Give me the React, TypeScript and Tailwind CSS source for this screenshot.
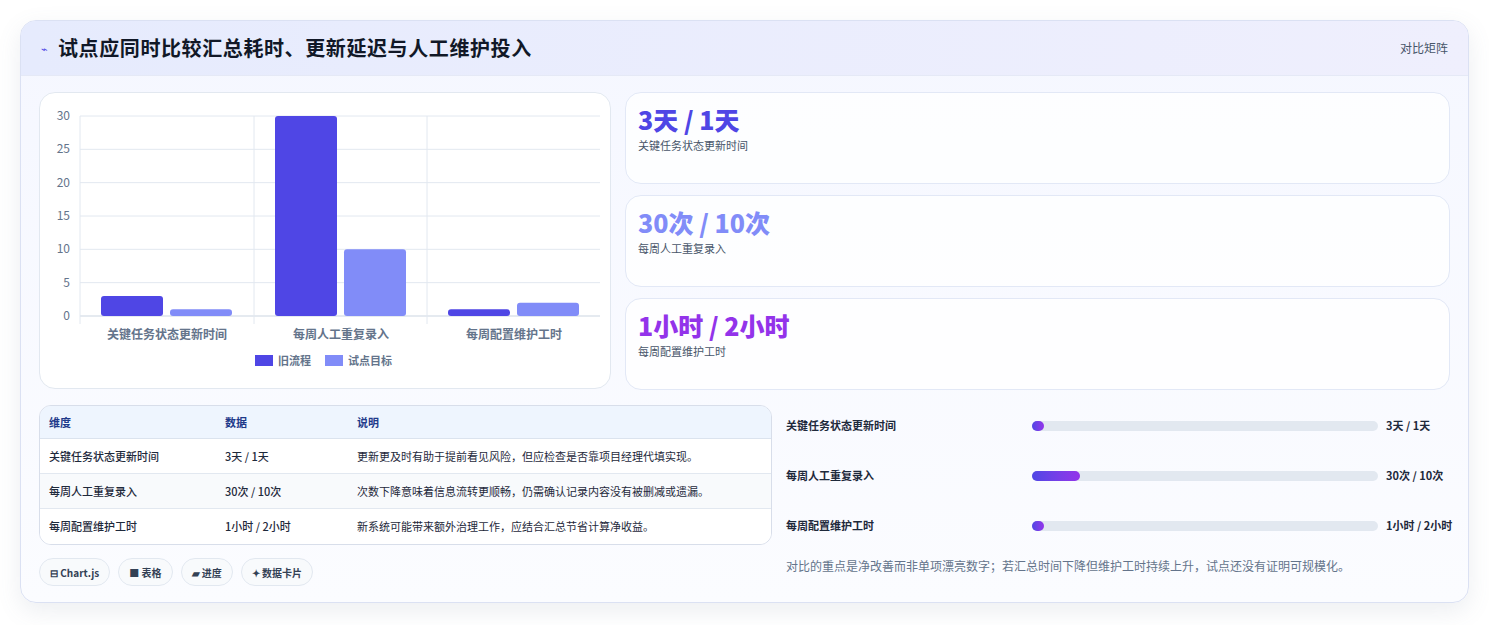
import React from 'react';

const font = '"Noto Sans CJK SC", "Noto Sans", sans-serif';

const kpis = [
  { v: '3天 / 1天', l: '关键任务状态更新时间', c: 'text-[#4f46e5]' },
  { v: '30次 / 10次', l: '每周人工重复录入', c: 'text-[#818cf8]' },
  { v: '1小时 / 2小时', l: '每周配置维护工时', c: 'text-[#9333ea]' },
];

const rows = [
  ['关键任务状态更新时间', '3天 / 1天', '更新更及时有助于提前看见风险，但应检查是否靠项目经理代填实现。'],
  ['每周人工重复录入', '30次 / 10次', '次数下降意味着信息流转更顺畅，仍需确认记录内容没有被删减或遗漏。'],
  ['每周配置维护工时', '1小时 / 2小时', '新系统可能带来额外治理工作，应结合汇总节省计算净收益。'],
];

const progress = [
  { l: '关键任务状态更新时间', v: '3天 / 1天', w: 12 },
  { l: '每周人工重复录入', v: '30次 / 10次', w: 48 },
  { l: '每周配置维护工时', v: '1小时 / 2小时', w: 12 },
];

function Chart() {
  const y0 = 223;
  const unit = 200 / 30;
  const groups = [
    { label: '关键任务状态更新时间', a: 3, b: 1, x: 61 },
    { label: '每周人工重复录入', a: 30, b: 10, x: 235 },
    { label: '每周配置维护工时', a: 1, b: 2, x: 408 },
  ];
  return (
    <svg width="572" height="297" className="block">
      {[0, 5, 10, 15, 20, 25, 30].map((t) => {
        const y = y0 - t * unit;
        return (
          <g key={t}>
            <line x1="40" x2="560" y1={y} y2={y} stroke={t === 0 ? '#cbd5e1' : '#e2e8f0'} />
            <text x="30" y={y + 4} textAnchor="end" fontSize="12" fill="#64748b" fontFamily={font}>{t}</text>
          </g>
        );
      })}
      {[40, 214, 387].map((x) => (
        <line key={x} x1={x} x2={x} y1={y0 - 200} y2={y0 + 8} stroke="#e2e8f0" />
      ))}
      {groups.map((g) => (
        <g key={g.label}>
          <rect x={g.x} y={y0 - g.a * unit} width="62" height={g.a * unit} rx="3" fill="#4f46e5" />
          <rect x={g.x + 69} y={y0 - g.b * unit} width="62" height={g.b * unit} rx="3" fill="#818cf8" />
          <text x={g.x + 66} y="246" textAnchor="middle" fontSize="12" fontWeight="600" fill="#64748b" fontFamily={font}>{g.label}</text>
        </g>
      ))}
      <rect x="215" y="262" width="18" height="11" fill="#4f46e5" />
      <text x="238" y="272" fontSize="11" fontWeight="600" fill="#64748b" fontFamily={font}>旧流程</text>
      <rect x="285" y="262" width="18" height="11" fill="#818cf8" />
      <text x="308" y="272" fontSize="11" fontWeight="600" fill="#64748b" fontFamily={font}>试点目标</text>
    </svg>
  );
}

export default function App() {
  return (
    <div className="min-h-[625px] bg-white p-5" style={{ fontFamily: font }}>
      <div className="rounded-2xl border border-[#dbe1f3] bg-gradient-to-b from-[#f5f7ff] to-[#fbfcff] shadow-[0_8px_24px_rgba(100,116,139,0.12)] overflow-hidden">
        <div className="flex h-[55px] items-center justify-between bg-gradient-to-r from-[#e6ebfd] to-[#efeffd] px-5 border-b border-[#e5e9f6]">
          <div className="flex items-center gap-[10px]">
            <span className="text-[11px] text-[#4f46e5]">⌁</span>
            <h1 className="text-[20px] font-bold tracking-[0.6px] text-[#111827]">试点应同时比较汇总耗时、更新延迟与人工维护投入</h1>
          </div>
          <span className="text-[12px] text-[#475569]">对比矩阵</span>
        </div>
        <div className="px-[18px] pt-[16px] pb-4">
          <div className="flex gap-[14px]">
            <div className="w-[572px] h-[297px] rounded-2xl border border-[#e2e8f0] bg-white shrink-0">
              <Chart />
            </div>
            <div className="flex flex-1 flex-col gap-[11px]">
              {kpis.map((k) => (
                <div key={k.l} className="h-[92px] rounded-2xl border border-[#e2e8f6] bg-white/80 px-[12px] pt-[8px]">
                  <div className={`text-[25px] font-extrabold leading-[36px] ${k.c}`}>{k.v}</div>
                  <div className="text-[11px] text-[#475569]">{k.l}</div>
                </div>
              ))}
            </div>
          </div>
          <div className="mt-[15px] flex gap-[14px]">
            <div className="w-[733px] shrink-0">
              <table className="w-full border-separate border-spacing-0 overflow-hidden rounded-xl border border-[#d8deea] text-[11px] text-[#1e293b]">
                <thead>
                  <tr className="bg-[#eef5fe] text-[#1e3a8a] font-semibold">
                    <td className="h-[33px] pl-[9px] w-[185px] border-b border-[#dbe3ee]">维度</td>
                    <td className="w-[132px] border-b border-[#dbe3ee]">数据</td>
                    <td className="border-b border-[#dbe3ee]">说明</td>
                  </tr>
                </thead>
                <tbody>
                  {rows.map((r, i) => (
                    <tr key={i} className={i === 1 ? 'bg-[#f8fafc]' : 'bg-white'}>
                      <td className={`h-[35px] pl-[9px] font-medium ${i < 2 ? 'border-b border-[#e2e8f0]' : ''}`}>{r[0]}</td>
                      <td className={`font-medium ${i < 2 ? 'border-b border-[#e2e8f0]' : ''}`}>{r[1]}</td>
                      <td className={i < 2 ? 'border-b border-[#e2e8f0]' : ''}>{r[2]}</td>
                    </tr>
                  ))}
                </tbody>
              </table>
              <div className="mt-[13px] flex gap-2 text-[10px] font-semibold text-[#334155]">
                {['⊟ Chart.js', '■ 表格', '▰ 进度', '✦ 数据卡片'].map((c) => (
                  <span key={c} className="h-[28px] flex items-center rounded-full border border-[#e2e8f0] bg-[#f8fafc] px-[10px]">{c}</span>
                ))}
              </div>
            </div>
            <div className="flex-1 pt-[11px]">
              {progress.map((p) => (
                <div key={p.l} className="flex h-[50px] items-start pt-[1px] text-[11px] font-semibold text-[#1e293b]">
                  <div className="w-[246px] shrink-0">{p.l}</div>
                  <div className="mt-[4px] h-[10px] flex-1 rounded-full bg-[#e2e8f0]">
                    <div className="h-full rounded-full bg-gradient-to-r from-[#4f46e5] to-[#9333ea]" style={{ width: p.w }} />
                  </div>
                  <div className="w-[72px] shrink-0 pl-2 whitespace-nowrap">{p.v}</div>
                </div>
              ))}
              <p className="mt-[-9px] text-[12px] text-[#64748b]">对比的重点是净改善而非单项漂亮数字；若汇总时间下降但维护工时持续上升，试点还没有证明可规模化。</p>
            </div>
          </div>
        </div>
      </div>
    </div>
  );
}
